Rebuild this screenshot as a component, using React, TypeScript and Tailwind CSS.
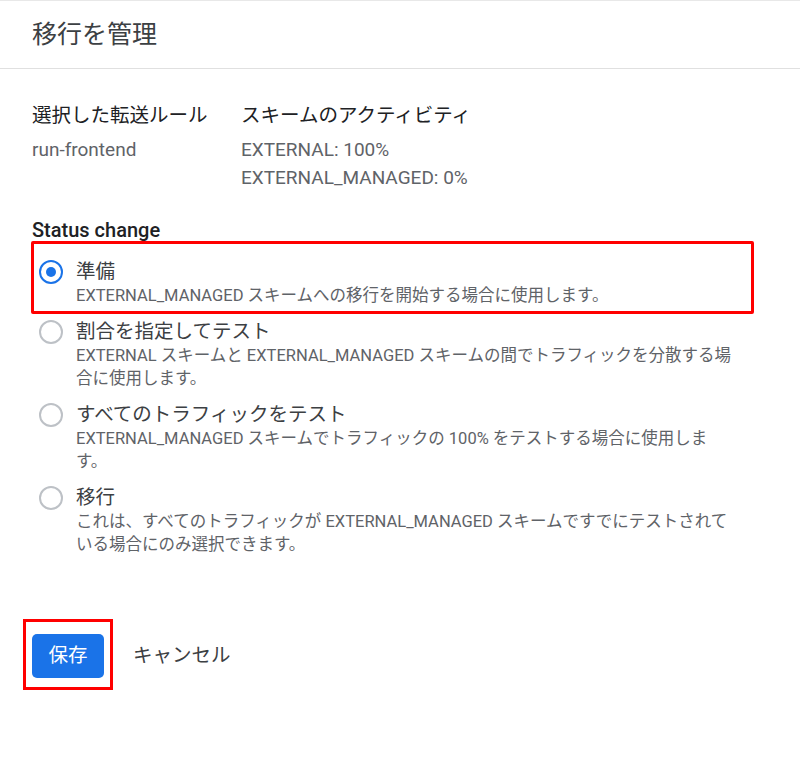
import React from "react";

const font = { fontFamily: 'Roboto, "Noto Sans CJK JP", sans-serif' };

type Option = {
  label: string;
  lines: string[];
  selected?: boolean;
};

const options: Option[] = [
  {
    label: "準備",
    lines: ["EXTERNAL_MANAGED スキームへの移行を開始する場合に使用します。"],
    selected: true,
  },
  {
    label: "割合を指定してテスト",
    lines: [
      "EXTERNAL スキームと EXTERNAL_MANAGED スキームの間でトラフィックを分散する場",
      "合に使用します。",
    ],
  },
  {
    label: "すべてのトラフィックをテスト",
    lines: [
      "EXTERNAL_MANAGED スキームでトラフィックの 100% をテストする場合に使用しま",
      "す。",
    ],
  },
  {
    label: "移行",
    lines: [
      "これは、すべてのトラフィックが EXTERNAL_MANAGED スキームですでにテストされて",
      "いる場合にのみ選択できます。",
    ],
  },
];

const Radio = ({ selected }: { selected?: boolean }) => (
  <div
    className={
      selected
        ? "flex h-6 w-6 shrink-0 items-center justify-center rounded-full border-[2.5px] border-[#1a73e8]"
        : "flex h-6 w-6 shrink-0 items-center justify-center rounded-full border-2 border-[#bdc1c6]"
    }
  >
    {selected ? <div className="h-[10px] w-[10px] rounded-full bg-[#1a73e8]" /> : null}
  </div>
);

const RadioRow = ({ option }: { option: Option }) => (
  <div className="relative flex items-start">
    <div className="ml-[7px] mr-[13px] flex h-6 items-center">
      <Radio selected={option.selected} />
    </div>
    <div>
      <div className="text-[19.5px] leading-6 text-[#3c4043]">{option.label}</div>
      <div className="text-[16.5px] leading-[23px] text-[#5f6368]">
        {option.lines.map((line, i) => (
          <div key={i} className="whitespace-nowrap">
            {line}
          </div>
        ))}
      </div>
    </div>
    {option.selected ? (
      <div className="pointer-events-none absolute -left-[1px] -top-[19px] -bottom-[7px] right-[14px] rounded-[2px] border-[3px] border-[#f00]" />
    ) : null}
  </div>
);

const App = () => {
  return (
    <div className="min-h-[770px] w-[800px] bg-white" style={font}>
      <div className="flex h-[69px] items-center border-y border-t-[#e8e8e8] border-b-[#e0e0e0] px-8">
        <h1 className="text-[25px] font-normal text-[#3c4043]">移行を管理</h1>
      </div>

      <main className="px-8">
        <div className="mt-[33px] grid grid-cols-[209px_1fr]">
          <div className="text-[19.5px] leading-7 text-[#202124]">選択した転送ルール</div>
          <div className="text-[19.5px] leading-7 text-[#202124]">スキームのアクティビティ</div>
          <div className="mt-[6px] text-[19px] leading-7 text-[#5f6368]">run-frontend</div>
          <div className="mt-[6px] text-[19px] leading-7 text-[#5f6368]">
            <div>EXTERNAL: 100%</div>
            <div>EXTERNAL_MANAGED: 0%</div>
          </div>
        </div>

        <div className="mt-6 text-[20px] font-medium leading-7 text-[#202124]">Status change</div>

        <div className="mt-4 flex flex-col gap-[13px]">
          {options.map((option, index) => (
            <RadioRow key={index} option={option} />
          ))}
        </div>

        <div className="mt-[78px] flex items-center">
          <div className="relative">
            <button className="h-[44px] w-[72px] rounded-[5px] bg-[#1a73e8] text-[19.5px] text-white">
              保存
            </button>
            <div className="pointer-events-none absolute -left-[9px] -right-[9px] -top-[15px] -bottom-[12px] border-[3px] border-[#f00]" />
          </div>
          <button className="ml-[29px] text-[19.5px] text-[#3c4043]">キャンセル</button>
        </div>
      </main>
    </div>
  );
};

export default App;
